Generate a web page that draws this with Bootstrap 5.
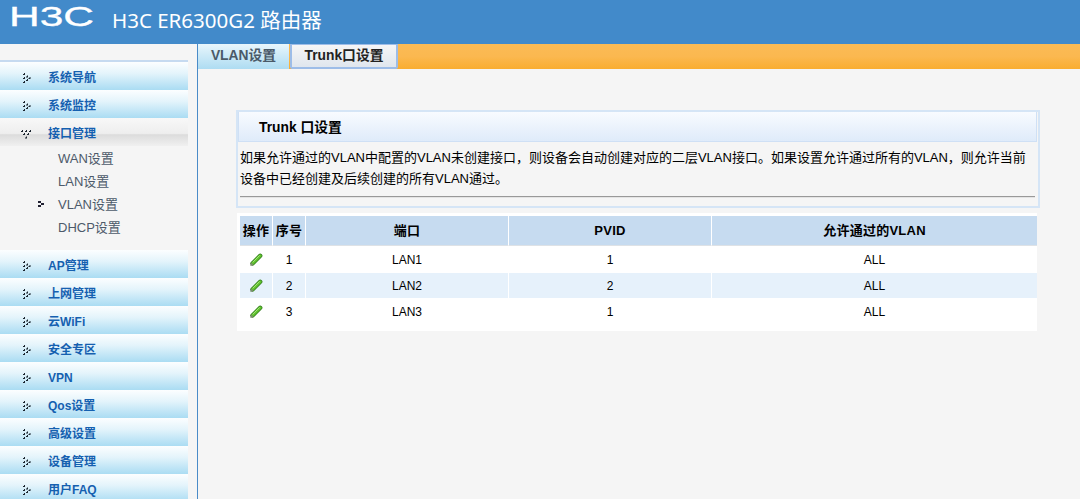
<!DOCTYPE html>
<html lang="zh">
<head>
<meta charset="utf-8">
<title>H3C ER6300G2</title>
<link href="https://cdn.jsdelivr.net/npm/bootstrap@5.3.0/dist/css/bootstrap.min.css" rel="stylesheet">
<style>
html,body{height:499px;overflow:hidden}
body{background:#f5f5f5;font-family:"Liberation Sans","Noto Sans CJK SC",sans-serif;font-size:13px;color:#000}
.topbar{height:44px;background:#428aca;color:#fff}
.logo-svg{width:90px;height:44px;margin-left:10px;flex:none}
.prod{font-family:"Noto Sans","Noto Sans CJK SC",sans-serif;font-size:20.500px;margin-left:12px;margin-top:-3px}
.shell{height:455px}
.side{width:198px;border-right:1px solid #4a8bc8;padding:16px 9px 0 0;overflow:hidden}
.side-top{border-top:2px solid #c6daf0}
.mitem{height:28px;padding-left:48px;padding-top:4px;font-weight:700;font-size:12px;color:#1560b0;background:linear-gradient(#fcfeff,#e4f4fb 40%,#aadcf3);position:relative}
.mitem.on{background:linear-gradient(#f8f8f8,#eeeeee 55%,#dcdcdc 60%,#f0f0f0)}
.mark-ic{position:absolute;left:22px;top:9px}
.mark-ic.dn{left:21px;top:11px}
.sub-wrap{padding:1px 0 11px}
.sitem{height:23px;padding-left:58px;color:#4d5a6a;font-size:13px;position:relative}
.sub-ic{position:absolute;left:38px;top:8px}
.main-col{min-width:0}
.tabs{height:25px;background:linear-gradient(#fbbb55,#fbb850 50%,#f9ad30)}
.tab-a,.tab-b{height:25px;font-weight:700;font-size:13.800px}
.tab-a{width:91px;color:#4a5a68;background:linear-gradient(#e8f6fc,#aedcf2)}
.tab-b{width:108px;margin-left:1px;color:#222;background:linear-gradient(#f6f6f6,#dfe6ee);border:2px solid #9dbde8;border-top-width:1px;border-radius:0 0 2px 2px}
.content{padding:41px 39px 0 38px;width:881px}
.panel-box{width:804px;height:98px;border:2px solid #d5e5f6;padding:0 1px 0 0}
.panel-head{height:30px;padding:4px 0 0 20px;font-weight:700;font-size:13.800px;background:linear-gradient(#f8fbff,#dfebfa);border:1px solid #cfe0f5;border-top:0}
.panel-text{padding:5px 2px 0 2px;line-height:21px;font-size:13px;color:#000;height:45px;font-family:"Liberation Sans","Noto Sans CJK TC",sans-serif}
.panel-rule{height:2px;border:0;border-top:1px solid #999;border-bottom:1px solid #e4e4e4;margin:9px 2px 0 2px;opacity:1}
.tbl-wrap{width:800px;height:118px;background:#fff;margin:5px 0 0 1px;padding:3px 0 0 3px}
.tbl-grid{width:797px;table-layout:fixed;border-collapse:separate;border-spacing:0;margin:0}
.tbl-grid th{height:30px;background:#c6dbf0;text-align:center;font-size:13px;font-weight:700;letter-spacing:.25px;border-right:1px solid #fff;padding:0;vertical-align:middle;color:#000;box-shadow:none}
.tbl-grid td{height:27px;text-align:center;font-size:12px;padding:0;border-right:1px solid #fff;border-bottom:0;vertical-align:middle;background:#fff;color:#000;box-shadow:none}
.tbl-grid tr.alt td{background:#e6f1fb;height:25px}
.tbl-grid th:last-child,.tbl-grid td:last-child{border-right:0}
</style>
</head>
<body>
<header class="topbar d-flex align-items-center">
  <svg class="logo-svg" viewBox="0 0 90 44" role="img" aria-label="H3C"><text x="-1" y="26" font-family="Liberation Sans" font-size="28" fill="#fff" stroke="#fff" stroke-width=".3" textLength="85" lengthAdjust="spacingAndGlyphs">H3C</text></svg>
  <span class="prod">H3C ER6300G2 路由器</span>
</header>
<div class="shell d-flex">
  <aside class="side flex-shrink-0">
    <div class="side-top">
      <div class="mitem d-flex align-items-center"><svg class="mark-ic" width="11" height="13" viewBox="0 0 11 13"><use href="#dotr"/></svg>系统导航</div>
      <div class="mitem d-flex align-items-center"><svg class="mark-ic" width="11" height="13" viewBox="0 0 11 13"><use href="#dotr"/></svg>系统监控</div>
      <div class="mitem on d-flex align-items-center"><svg class="mark-ic dn" width="12" height="11" viewBox="0 0 12 11"><use href="#dotd"/></svg>接口管理</div>
      <div class="sub-wrap">
        <div class="sitem d-flex align-items-center">WAN设置</div>
        <div class="sitem d-flex align-items-center">LAN设置</div>
        <div class="sitem d-flex align-items-center"><svg class="sub-ic" width="7" height="6" viewBox="0 0 7 6"><rect x="0" y="0" width="3" height="2" fill="#223"/><rect x="3" y="2" width="3" height="2" fill="#223"/><rect x="0" y="4" width="3" height="2" fill="#223"/></svg>VLAN设置</div>
        <div class="sitem d-flex align-items-center">DHCP设置</div>
      </div>
      <div class="mitem d-flex align-items-center"><svg class="mark-ic" width="11" height="13" viewBox="0 0 11 13"><use href="#dotr"/></svg>AP管理</div>
      <div class="mitem d-flex align-items-center"><svg class="mark-ic" width="11" height="13" viewBox="0 0 11 13"><use href="#dotr"/></svg>上网管理</div>
      <div class="mitem d-flex align-items-center"><svg class="mark-ic" width="11" height="13" viewBox="0 0 11 13"><use href="#dotr"/></svg>云WiFi</div>
      <div class="mitem d-flex align-items-center"><svg class="mark-ic" width="11" height="13" viewBox="0 0 11 13"><use href="#dotr"/></svg>安全专区</div>
      <div class="mitem d-flex align-items-center"><svg class="mark-ic" width="11" height="13" viewBox="0 0 11 13"><use href="#dotr"/></svg>VPN</div>
      <div class="mitem d-flex align-items-center"><svg class="mark-ic" width="11" height="13" viewBox="0 0 11 13"><use href="#dotr"/></svg>Qos设置</div>
      <div class="mitem d-flex align-items-center"><svg class="mark-ic" width="11" height="13" viewBox="0 0 11 13"><use href="#dotr"/></svg>高级设置</div>
      <div class="mitem d-flex align-items-center"><svg class="mark-ic" width="11" height="13" viewBox="0 0 11 13"><use href="#dotr"/></svg>设备管理</div>
      <div class="mitem d-flex align-items-center"><svg class="mark-ic" width="11" height="13" viewBox="0 0 11 13"><use href="#dotr"/></svg>用户FAQ</div>
    </div>
  </aside>
  <main class="main-col flex-grow-1">
    <div class="tabs d-flex">
      <div class="tab-a d-flex align-items-center justify-content-center">VLAN设置</div>
      <div class="tab-b d-flex align-items-center justify-content-center">Trunk口设置</div>
    </div>
    <div class="content">
      <section class="panel-box">
        <div class="panel-head d-flex align-items-center">Trunk 口设置</div>
        <div class="panel-text">如果允许通过的VLAN中配置的VLAN未创建接口，则设备会自动创建对应的二层VLAN接口。如果设置允许通过所有的VLAN，则允许当前设备中已经创建及后续创建的所有VLAN通过。</div>
        <hr class="panel-rule">
      </section>
      <div class="tbl-wrap">
        <table class="table tbl-grid">
          <colgroup><col style="width:33px"><col style="width:33px"><col style="width:203px"><col style="width:203px"><col style="width:325px"></colgroup>
          <thead><tr><th>操作</th><th>序号</th><th>端口</th><th>PVID</th><th>允许通过的VLAN</th></tr></thead>
          <tbody>
            <tr><td><svg width="14" height="14" viewBox="0 0 16 16"><use href="#pen"/></svg></td><td>1</td><td>LAN1</td><td>1</td><td>ALL</td></tr>
            <tr class="alt"><td><svg width="14" height="14" viewBox="0 0 16 16"><use href="#pen"/></svg></td><td>2</td><td>LAN2</td><td>2</td><td>ALL</td></tr>
            <tr><td><svg width="14" height="14" viewBox="0 0 16 16"><use href="#pen"/></svg></td><td>3</td><td>LAN3</td><td>1</td><td>ALL</td></tr>
          </tbody>
        </table>
      </div>
    </div>
  </main>
</div>
<svg width="0" height="0" class="position-absolute">
  <defs>
    <g id="dotr" fill="#1c2630"><path d="M2 2h1v2h-2v-1h1z"/><path d="M5 4.500h1v2h-2v-1h1z"/><path d="M7.500 6h1v2h-2v-1h1z"/><path d="M5 8h1v2h-2v-1h1z"/><path d="M2 6h1v2h-2v-1h1z"/><path d="M2 10h1v2h-2v-1h1z"/></g>
    <g id="dotd" fill="#1c2630"><path d="M1 1h1v2h-2v-1h1z"/><path d="M5 1h1v2h-2v-1h1z"/><path d="M9 1h1v2h-2v-1h1z"/><path d="M3 4h1v2h-2v-1h1z"/><path d="M7 4h1v2h-2v-1h1z"/><path d="M5 7.500h1v2h-2v-1h1z"/></g>
    <g id="pen">
      <path d="M4 12 L12.800 3.200" stroke="#2f7a1a" stroke-width="5" stroke-linecap="round" fill="none"/>
      <path d="M4 12 L12.800 3.200" stroke="#5ec02c" stroke-width="3.400" stroke-linecap="round" fill="none"/>
      <path d="M4.500 10.500 L12 3" stroke="#b6ee8c" stroke-width="1" stroke-linecap="round" fill="none"/>
      <path d="M1.500 14.800 L2.400 10.800 L5.300 13.700 Z" fill="#7d8c70"/>
    </g>
  </defs>
</svg>
</body>
</html>
